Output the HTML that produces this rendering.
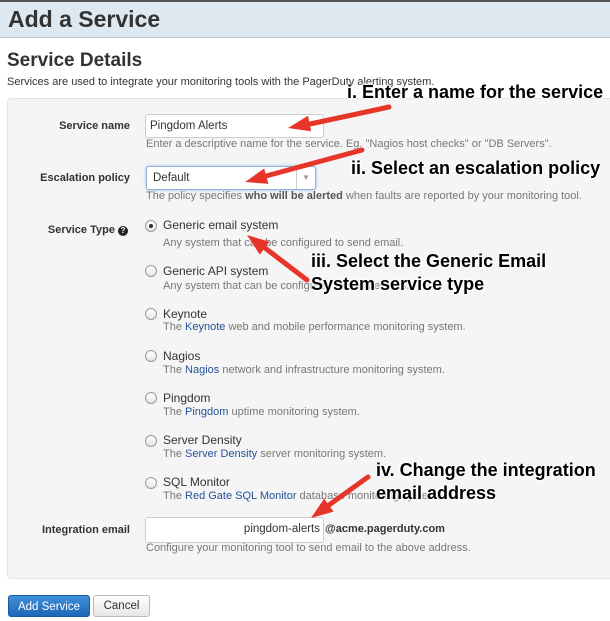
<!DOCTYPE html>
<html><head><meta charset="utf-8"><style>
body{margin:0;width:610px;height:621px;overflow:hidden;background:#fff;font-family:"Liberation Sans",sans-serif;color:#333;position:relative}
.a{position:absolute;white-space:nowrap}
.hdr{position:absolute;left:0;top:0;width:610px;height:38px;background:#dde8f1;border-top:2px solid #555;border-bottom:1px solid #b9cbd9;box-sizing:border-box}
.panel{position:absolute;left:7px;top:98px;width:620px;height:479px;background:#f5f5f5;border:1px solid #e3e3e3;border-radius:4px}
.lbl{font-size:11px;font-weight:bold;color:#333;text-align:right;width:112px;left:0}
.help{font-size:11px;color:#777}
.inp{position:absolute;background:#fff;border:1px solid #ccc;border-radius:3px;box-sizing:border-box;font-size:11.5px;color:#333}
.r{position:absolute;width:10px;height:10px;border:1px solid #999;border-radius:50%;background:linear-gradient(#fff,#e6e6e6)}
.opt{font-size:12px;color:#333}
.b{color:#22529a}
.ann{font-size:18px;font-weight:bold;color:#000;text-shadow:0 0 2px #fff,0 0 2px #fff,1px 1px 2px #fff,-1px -1px 2px #fff;letter-spacing:0}
</style></head><body>
<div class="hdr"></div>
<div class="a" style="left:8px;top:6px;font-size:23px;font-weight:bold;color:#333">Add a Service</div>
<div class="a" style="left:7px;top:50px;font-size:19px;font-weight:bold;color:#333">Service Details</div>
<div class="a" style="left:7px;top:76px;font-size:11px;color:#333">Services are used to integrate your monitoring tools with the PagerDuty alerting system.</div>
<div class="panel"></div>
<div class="a lbl" style="top:120px;width:130px">Service name</div>
<div class="inp" style="left:145px;top:114px;width:179px;height:24px;padding:5px 4px">Pingdom Alerts</div>
<div class="a help" style="left:146px;top:138px">Enter a descriptive name for the service. Eg. "Nagios host checks" or "DB Servers".</div>
<div class="a lbl" style="top:172px;width:130px">Escalation policy</div>
<div class="inp" style="left:146px;top:166px;width:170px;height:24px;padding:5px 6px;border-color:#8db0d8;box-shadow:0 0 3px #9bc0e8">Default<span style="position:absolute;right:0;top:0;width:18px;height:22px;border-left:1px solid #ccc;color:#999;font-size:8px;text-align:center;line-height:22px">▼</span></div>
<div class="a help" style="left:146px;top:190px">The policy specifies <b style="color:#555">who will be alerted</b> when faults are reported by your monitoring tool.</div>
<div class="a lbl" style="top:224px;width:128px">Service Type <span style="display:inline-block;width:10px;height:10px;border-radius:50%;background:#222;color:#fff;font-size:8px;line-height:10px;text-align:center">?</span></div>

<div class="r" style="left:145px;top:220px"><div style="width:4px;height:4px;background:#333;border-radius:50%;margin:3px"></div></div>
<div class="a opt" style="left:163px;top:218px">Generic email system</div>
<div class="a help" style="left:163px;top:237px">Any system that can be configured to send email.</div>
<div class="r" style="left:145px;top:265px"></div>
<div class="a opt" style="left:163px;top:264px">Generic API system</div>
<div class="a help" style="left:163px;top:280px">Any system that can be configured to send events.</div>
<div class="r" style="left:145px;top:308px"></div>
<div class="a opt" style="left:163px;top:307px">Keynote</div>
<div class="a help" style="left:163px;top:321px">The <span class="b">Keynote</span> web and mobile performance monitoring system.</div>
<div class="r" style="left:145px;top:350px"></div>
<div class="a opt" style="left:163px;top:349px">Nagios</div>
<div class="a help" style="left:163px;top:364px">The <span class="b">Nagios</span> network and infrastructure monitoring system.</div>
<div class="r" style="left:145px;top:392px"></div>
<div class="a opt" style="left:163px;top:391px">Pingdom</div>
<div class="a help" style="left:163px;top:406px">The <span class="b">Pingdom</span> uptime monitoring system.</div>
<div class="r" style="left:145px;top:435px"></div>
<div class="a opt" style="left:163px;top:433px">Server Density</div>
<div class="a help" style="left:163px;top:448px">The <span class="b">Server Density</span> server monitoring system.</div>
<div class="r" style="left:145px;top:477px"></div>
<div class="a opt" style="left:163px;top:475px">SQL Monitor</div>
<div class="a help" style="left:163px;top:490px">The <span class="b">Red Gate SQL Monitor</span> database monitoring system.</div>

<div class="a lbl" style="top:524px;width:130px">Integration email</div>
<div class="inp" style="left:145px;top:517px;width:179px;height:26px;padding:5px 3px;text-align:right">pingdom-alerts</div>
<div class="a" style="left:325px;top:523px;font-size:11px;font-weight:bold;color:#333">@acme.pagerduty.com</div>
<div class="a help" style="left:146px;top:542px">Configure your monitoring tool to send email to the above address.</div>

<div class="a" style="left:8px;top:595px;width:82px;height:22px;background:linear-gradient(#3f8fd8,#1f66b8);border:1px solid #1a5aa0;border-radius:3px;color:#fff;font-size:11.5px;text-align:center;line-height:22px;box-sizing:border-box">Add Service</div>
<div class="a" style="left:93px;top:595px;width:57px;height:22px;background:linear-gradient(#fff,#e6e6e6);border:1px solid #bbb;border-radius:3px;color:#333;font-size:11.5px;text-align:center;line-height:20px;box-sizing:border-box">Cancel</div>

<svg class="a" style="left:0;top:0" width="610" height="621">
<g stroke="#e8352a" stroke-width="5" stroke-linecap="round">
<line x1="389" y1="107" x2="310" y2="124"/>
<line x1="362" y1="150" x2="266" y2="176"/>
<line x1="307" y1="280" x2="265" y2="248"/>
<line x1="368" y1="477" x2="329" y2="505"/>
</g>
<g fill="#e8352a">
<polygon points="288,128 308,115.7 311.2,131.3"/>
<polygon points="245,182 264.2,168.5 268.4,183.9"/>
<polygon points="247,235 269.4,241.8 259.8,254.6"/>
<polygon points="311,518 324.2,498.6 333.6,511.6"/>
</g>
</svg>

<div class="a ann" style="left:347px;top:82px">i. Enter a name for the service</div>
<div class="a ann" style="left:351px;top:158px">ii. Select an escalation policy</div>
<div class="a ann" style="left:311px;top:251px">iii. Select the Generic Email</div>
<div class="a ann" style="left:311px;top:274px">System service type</div>
<div class="a ann" style="left:376px;top:460px">iv. Change the integration</div>
<div class="a ann" style="left:376px;top:483px">email address</div>
</body></html>
